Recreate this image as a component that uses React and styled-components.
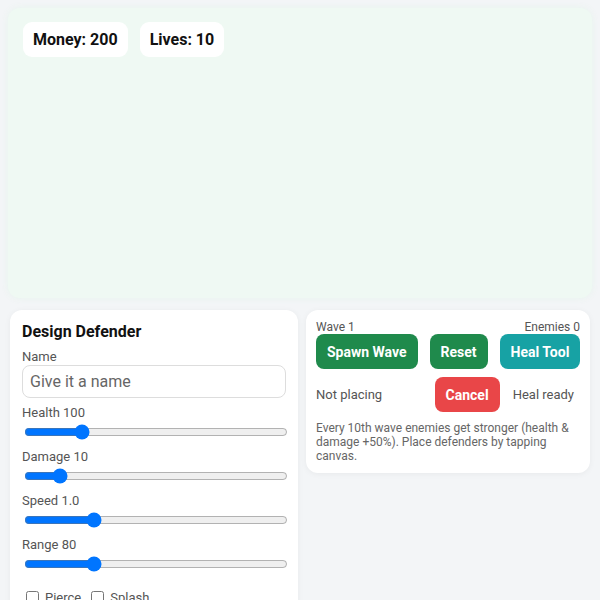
import React, { useState } from 'react';
import styled, { createGlobalStyle } from 'styled-components';

const GlobalStyle = createGlobalStyle`
    * { box-sizing: border-box; }
    body {
        margin: 0;
        background: #f3f5f7;
        font-family: Roboto, "Liberation Sans", sans-serif;
        color: #111;
    }
`;

function Slider({ label, value, min, max, step, onChange }) {
    return (
        <Group>
            <Label>{label} {value}</Label>
            <Range
                type="range"
                min={min}
                max={max}
                step={step}
                value={value}
                onChange={e => onChange(e.target.value)}
            />
        </Group>
    );
}

export default function App() {
    const [health, setHealth] = useState(100);
    const [damage, setDamage] = useState(10);
    const [speed, setSpeed] = useState('1.0');
    const [range, setRange] = useState(80);

    return (
        <Page>
            <GlobalStyle />
            <Canvas>
                <Hud>
                    <Badge>Money: 200</Badge>
                    <Badge>Lives: 10</Badge>
                </Hud>
            </Canvas>
            <Panels>
                <Panel>
                    <Title>Design Defender</Title>
                    <Group>
                        <Label>Name</Label>
                        <NameInput placeholder="Give it a name" />
                    </Group>
                    <Slider label="Health" value={health} min={50} max={300} step={10} onChange={setHealth} />
                    <Slider label="Damage" value={damage} min={5} max={50} step={1} onChange={setDamage} />
                    <Slider label="Speed" value={speed} min={0.5} max={2.5} step={0.1} onChange={v => setSpeed(Number(v).toFixed(1))} />
                    <Slider label="Range" value={range} min={40} max={200} step={5} onChange={setRange} />
                    <Checks>
                        <Check><Box type="checkbox" />Pierce</Check>
                        <Check><Box type="checkbox" />Splash</Check>
                    </Checks>
                </Panel>
                <InfoPanel>
                    <Meta>
                        <span>Wave 1</span>
                        <span>Enemies 0</span>
                    </Meta>
                    <Buttons>
                        <Button>Spawn Wave</Button>
                        <Button>Reset</Button>
                        <Button $tone="teal">Heal Tool</Button>
                    </Buttons>
                    <Status>
                        <StatusText $grow>Not placing</StatusText>
                        <Button $tone="red">Cancel</Button>
                        <StatusText>Heal ready</StatusText>
                    </Status>
                    <Hint>
                        Every 10th wave enemies get stronger (health &amp; damage +50%). Place defenders by tapping canvas.
                    </Hint>
                </InfoPanel>
            </Panels>
        </Page>
    );
}

const Page = styled.div`
    padding: 8px;
`;

const Canvas = styled.div`
    position: relative;
    height: 290px;
    border-radius: 12px;
    background: #eff9f3;
    box-shadow: 0 0 6px rgba(230, 244, 236, 0.9);
`;

const Hud = styled.div`
    position: absolute;
    top: 14px;
    left: 15px;
    display: flex;
    gap: 12px;
`;

const Badge = styled.div`
    background: #fff;
    border-radius: 9px;
    padding: 0 10px;
    height: 35px;
    display: flex;
    align-items: center;
    font-size: 16px;
    font-weight: 700;
    color: #111;
`;

const Panels = styled.div`
    display: grid;
    grid-template-columns: 288px minmax(0, 1fr);
    gap: 8px;
    align-items: start;
    margin: 12px 2px 0;
`;

const Panel = styled.div`
    background: #fff;
    border-radius: 12px;
    padding: 12px;
    display: flex;
    flex-direction: column;
    gap: 7px;
    box-shadow: 0 1px 6px rgba(0, 0, 0, 0.05);
`;

const Title = styled.h2`
    margin: 0;
    font-size: 16px;
    line-height: 20px;
    font-weight: 700;
    color: #111;
`;

const Group = styled.div`
    display: flex;
    flex-direction: column;
`;

const Label = styled.label`
    font-size: 13px;
    line-height: 16px;
    color: #555;
`;

const NameInput = styled.input`
    height: 33px;
    border: 1px solid #ddd;
    border-radius: 8px;
    padding: 0 7px;
    font-family: inherit;
    font-size: 16px;
    color: #222;
    outline: none;
    &::placeholder { color: #666; }
`;

const Range = styled.input`
    width: 100%;
    margin: 3px 2px 2px;
`;

const Checks = styled.div`
    display: flex;
    gap: 10px;
    margin-top: 9px;
    padding-left: 4px;
`;

const Check = styled.label`
    display: flex;
    align-items: center;
    gap: 6px;
    font-size: 13px;
    color: #555;
`;

const Box = styled.input`
    margin: 0;
    width: 13px;
    height: 13px;
`;

const InfoPanel = styled.div`
    background: #fff;
    border-radius: 12px;
    padding: 10px;
    box-shadow: 0 1px 6px rgba(0, 0, 0, 0.05);
`;

const Meta = styled.div`
    display: flex;
    justify-content: space-between;
    font-size: 12px;
    line-height: 14px;
    color: #555;
`;

const Buttons = styled.div`
    display: flex;
    justify-content: space-between;
    gap: 12px;
`;

const tones = {
    green: '#1f8a4c',
    teal: '#17a2a4',
    red: '#e94648',
};

const Button = styled.button`
    border: none;
    border-radius: 8px;
    padding: 0 11px;
    height: 35px;
    white-space: nowrap;
    background: ${p => tones[p.$tone || 'green']};
    color: #fff;
    font-family: inherit;
    font-size: 14px;
    font-weight: 700;
    cursor: pointer;
`;

const Status = styled.div`
    display: flex;
    align-items: center;
    gap: 13px;
    margin-top: 8px;
    padding-right: 6px;
`;

const StatusText = styled.span`
    flex: ${p => (p.$grow ? 1 : 'none')};
    font-size: 13px;
    color: #555;
`;

const Hint = styled.p`
    margin: 9px 0 0;
    font-size: 12px;
    line-height: 14px;
    color: #666;
`;
